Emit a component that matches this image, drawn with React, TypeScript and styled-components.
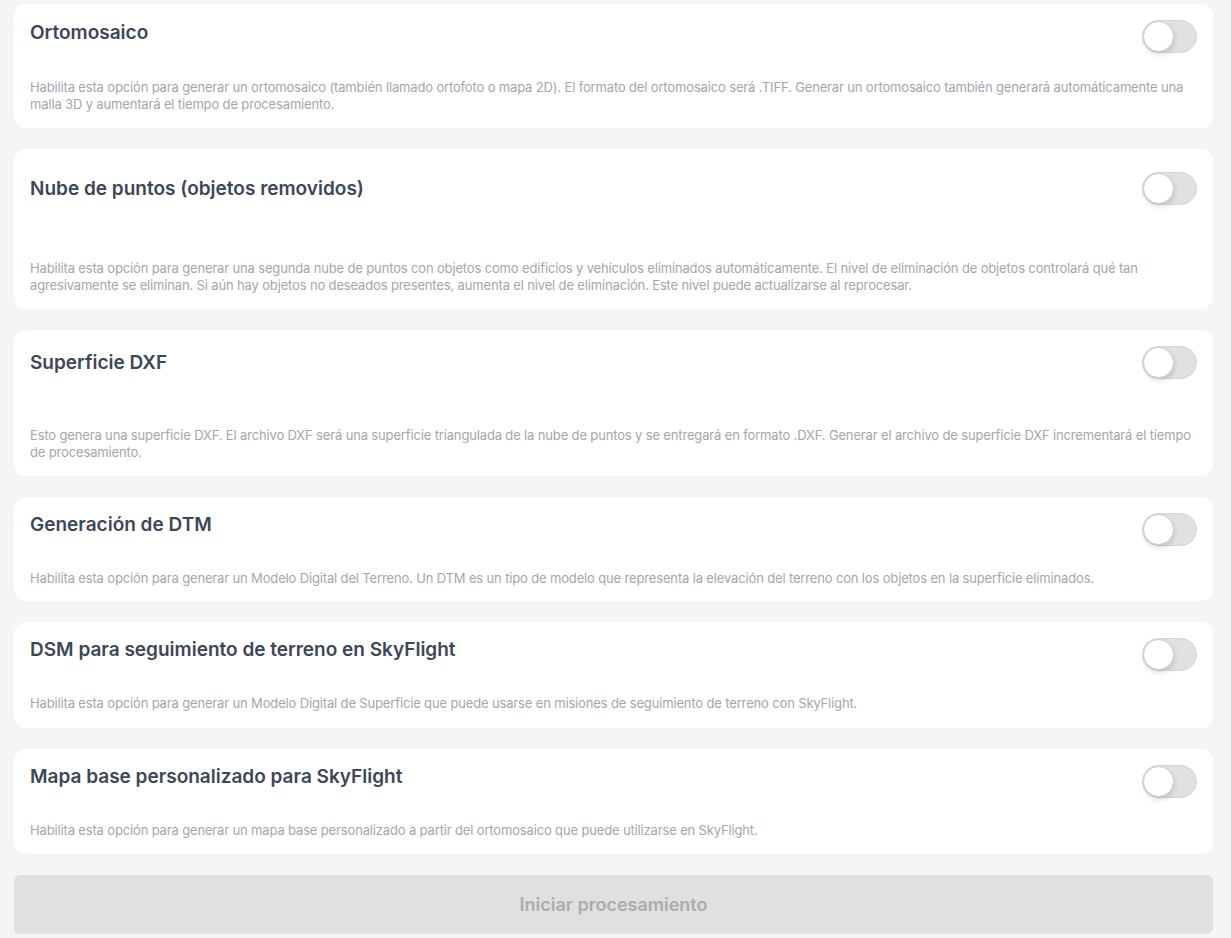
import React, { useState } from 'react';
import styled, { createGlobalStyle } from 'styled-components';

const GlobalStyle = createGlobalStyle`
    html, body {
        margin: 0;
        padding: 0;
        background: #f5f5f5;
        font-family: Inter, "Noto Sans", "Liberation Sans", sans-serif;
    }
    * { box-sizing: border-box; }
`;

const Page = styled.div`
    display: flex;
    flex-direction: column;
    gap: 21px;
    padding: 4px 18px 6px 14px;
    min-height: 938px;
`;

const Card = styled.section<{ $bottom: number; }>`
    display: flex;
    flex-direction: column;
    padding: 16px 16px ${props => props.$bottom}px;
    background: #ffffff;
    border-radius: 12px;
`;

const Header = styled.div<{ $top: number; }>`
    display: flex;
    justify-content: space-between;
    align-items: flex-start;
    padding-top: ${props => props.$top}px;
`;

const Title = styled.h3<{ $offset: number; }>`
    margin: ${props => props.$offset}px 0 0;
    font-size: 19px;
    line-height: 24px;
    font-weight: 600;
    color: #3c4757;
`;

const Description = styled.p<{ $gap: number; }>`
    margin: ${props => props.$gap}px 0 0;
    font-size: 13px;
    line-height: 17px;
    letter-spacing: -0.15px;
    color: #a3a6ad;
`;

const Track = styled.button<{ $on: boolean; }>`
    position: relative;
    flex: none;
    width: 55px;
    height: 33px;
    padding: 0;
    border: 1px solid #d4d4d6;
    border-radius: 17px;
    background: ${props => props.$on ? '#4c8bf5' : '#e1e1e3'};
    cursor: pointer;
`;

const Knob = styled.span<{ $on: boolean; }>`
    position: absolute;
    top: 0;
    left: ${props => props.$on ? '22px' : '0'};
    width: 31px;
    height: 31px;
    border-radius: 50%;
    background: #ffffff;
    border: 1px solid #cfcfd1;
    box-shadow: 1px 3px 5px rgba(0, 0, 0, 0.12);
    transition: left 0.15s ease;
`;

const StartButton = styled.button`
    height: 59px;
    border: none;
    border-radius: 6px;
    background: #e0e0e0;
    color: #a9acb1;
    font-family: inherit;
    font-size: 18px;
    font-weight: 600;
    cursor: not-allowed;
`;

const OPTIONS = [
    {
        title: 'Ortomosaico',
        text: 'Habilita esta opción para generar un ortomosaico (también llamado ortofoto o mapa 2D). El formato del ortomosaico será .TIFF. Generar un ortomosaico también generará automáticamente una malla 3D y aumentará el tiempo de procesamiento.',
        top: 0, offset: 1, gap: 26, bottom: 15,
    },
    {
        title: 'Nube de puntos (objetos removidos)',
        text: 'Habilita esta opción para generar una segunda nube de puntos con objetos como edificios y vehículos eliminados automáticamente. El nivel de eliminación de objetos controlará qué tan agresivamente se eliminan. Si aún hay objetos no deseados presentes, aumenta el nivel de eliminación. Este nivel puede actualizarse al reprocesar.',
        top: 7, offset: 5, gap: 55, bottom: 15,
    },
    {
        title: 'Superficie DXF',
        text: 'Esto genera una superficie DXF. El archivo DXF será una superficie triangulada de la nube de puntos y se entregará en formato .DXF. Generar el archivo de superficie DXF incrementará el tiempo de procesamiento.',
        top: 0, offset: 5, gap: 48, bottom: 15,
    },
    {
        title: 'Generación de DTM',
        text: 'Habilita esta opción para generar un Modelo Digital del Terreno. Un DTM es un tipo de modelo que representa la elevación del terreno con los objetos en la superficie eliminados.',
        top: 0, offset: 0, gap: 24, bottom: 14,
    },
    {
        title: 'DSM para seguimiento de terreno en SkyFlight',
        text: 'Habilita esta opción para generar un Modelo Digital de Superficie que puede usarse en misiones de seguimiento de terreno con SkyFlight.',
        top: 0, offset: 0, gap: 24, bottom: 16,
    },
    {
        title: 'Mapa base personalizado para SkyFlight',
        text: 'Habilita esta opción para generar un mapa base personalizado a partir del ortomosaico que puede utilizarse en SkyFlight.',
        top: 0, offset: 0, gap: 24, bottom: 15,
    },
];

function Toggle({ on, onChange }: { on: boolean; onChange: (v: boolean) => void; }) {
    return (
        <Track type="button" role="switch" aria-checked={on} $on={on} onClick={() => onChange(!on)}>
            <Knob $on={on} />
        </Track>
    );
}

export default function App() {
    const [enabled, setEnabled] = useState<boolean[]>(OPTIONS.map(() => false));
    const anyOn = enabled.some(Boolean);

    return (
        <>
            <GlobalStyle />
            <Page>
                {OPTIONS.map((option, index) => (
                    <Card key={option.title} $bottom={option.bottom}>
                        <Header $top={option.top}>
                            <Title $offset={option.offset}>{option.title}</Title>
                            <Toggle
                                on={enabled[index]}
                                onChange={(value) => setEnabled(prev => prev.map((v, i) => i === index ? value : v))}
                            />
                        </Header>
                        <Description $gap={option.gap}>{option.text}</Description>
                    </Card>
                ))}
                <StartButton disabled={!anyOn}>Iniciar procesamiento</StartButton>
            </Page>
        </>
    );
}
